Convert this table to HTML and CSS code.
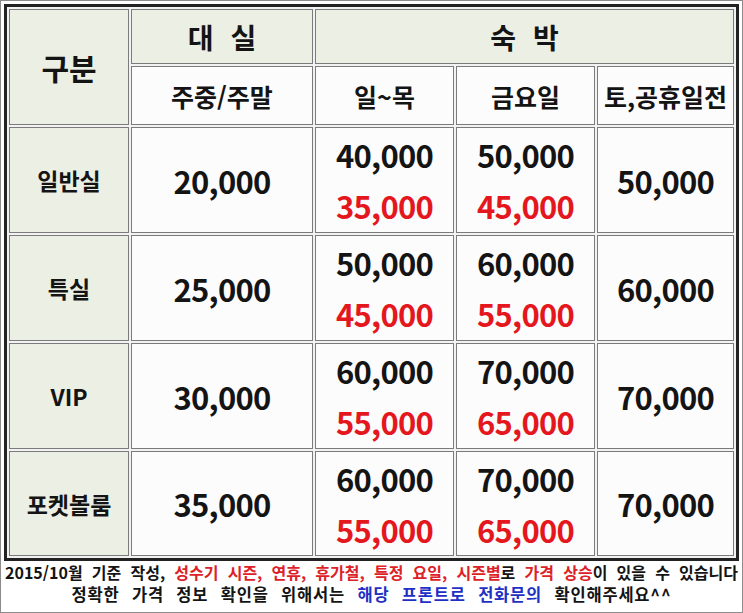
FILE: index.html
```html
<!DOCTYPE html>
<html lang="ko">
<head>
<meta charset="utf-8">
<title>요금표</title>
<link rel="stylesheet" href="styles.css">
</head>
<body>
<div class="frame">
  <table class="price">
    <colgroup>
      <col class="c1"><col class="c2"><col class="c3"><col class="c4"><col class="c5">
    </colgroup>
    <tr class="h1">
      <th rowspan="2" class="label big">구분</th>
      <th class="group">대 실</th>
      <th colspan="3" class="group">숙 박</th>
    </tr>
    <tr class="h2">
      <th class="sub">주중/주말</th>
      <th class="sub">일~목</th>
      <th class="sub">금요일</th>
      <th class="sub">토,공휴일전</th>
    </tr>
    <tr class="row r1">
      <th class="label">일반실</th>
      <td class="num">20,000</td>
      <td class="num"><div class="line">40,000</div><div class="line red">35,000</div></td>
      <td class="num"><div class="line">50,000</div><div class="line red">45,000</div></td>
      <td class="num">50,000</td>
    </tr>
    <tr class="row">
      <th class="label">특실</th>
      <td class="num">25,000</td>
      <td class="num"><div class="line">50,000</div><div class="line red">45,000</div></td>
      <td class="num"><div class="line">60,000</div><div class="line red">55,000</div></td>
      <td class="num">60,000</td>
    </tr>
    <tr class="row">
      <th class="label">VIP</th>
      <td class="num">30,000</td>
      <td class="num"><div class="line">60,000</div><div class="line red">55,000</div></td>
      <td class="num"><div class="line">70,000</div><div class="line red">65,000</div></td>
      <td class="num">70,000</td>
    </tr>
    <tr class="row last">
      <th class="label">포켓볼룸</th>
      <td class="num">35,000</td>
      <td class="num"><div class="line">60,000</div><div class="line red">55,000</div></td>
      <td class="num"><div class="line">70,000</div><div class="line red">65,000</div></td>
      <td class="num">70,000</td>
    </tr>
  </table>
  <div class="notes">
    <p class="n1">2015/10월 기준 작성, <span class="r">성수기 시즌, 연휴, 휴가철, 특정 요일, 시즌별</span>로 <span class="r">가격 상승</span>이 있을 수 있습니다</p>
    <p class="n2">정확한 가격 정보 확인을 위해서는 <span class="b">해당 프론트로 전화문의</span> 확인해주세요^^</p>
  </div>
</div>
</body>
</html>
```

FILE: styles.css
```css
html, body {
  margin: 0;
  padding: 0;
  background: #ffffff;
}

.frame {
  box-sizing: border-box;
  width: 743px;
  height: 613px;
  border: 1px solid #8c8c8c;
  padding: 3px 3px 0 3px;
  background: #ffffff;
  font-family: "Noto Sans CJK KR", "Noto Sans", sans-serif;
  color: #141414;
}

.price {
  width: 735px;
  table-layout: fixed;
  border-collapse: separate;
  border-spacing: 2px;
  border: 3px solid #222222;
  background: #f2f2f2;
}

.c1 { width: 120px; }
.c2 { width: 182px; }
.c3 { width: 139px; }
.c4 { width: 139px; }
.c5 { width: 137px; }

.price th,
.price td {
  box-sizing: border-box;
  border: 1px solid #7b7b7b;
  padding: 0;
  text-align: center;
  vertical-align: middle;
  font-weight: 700;
}

.h1 { height: 55px; }
.h2 { height: 59px; }
.row { height: 106px; }
.row.last { height: 105px; }

.label {
  background: #ecefe3;
  font-size: 23px;
}

.label.big {
  font-size: 30px;
}

.group {
  background: #ecefe3;
  font-size: 28px;
  word-spacing: 9px;
}

.sub {
  background: #fcfcfc;
  font-size: 25px;
}

.num {
  background: #fcfcfc;
  font-size: 31px;
  line-height: 1;
  letter-spacing: -0.8px;
}

.line {
  line-height: 51px;
}

.red {
  color: #e3171d;
}

.notes {
  padding: 0 1px;
}

.notes p {
  margin: 0;
  font-size: 16px;
  font-weight: 700;
  line-height: 22px;
  white-space: nowrap;
}

.n1 {
  text-align: justify;
  text-align-last: justify;
  white-space: normal !important;
}

.n2 {
  text-align: center;
  font-size: 16.5px !important;
  letter-spacing: 0.8px;
  word-spacing: 7px;
}

.r { color: #dc2228; }
.b { color: #1f30c4; }
```
